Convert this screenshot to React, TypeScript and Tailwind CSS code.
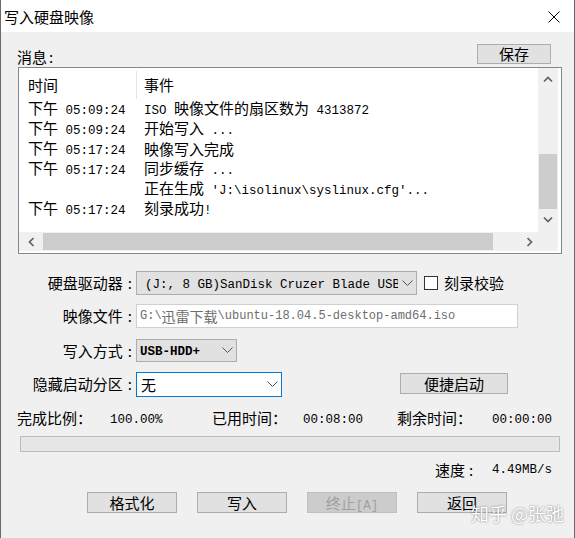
import type { ReactNode } from 'react';

function M({ children, className = '' }: { children: ReactNode; className?: string }) {
  return <span className={`font-['Liberation_Mono',monospace] text-[12.5px] ${className}`}>{children}</span>;
}

function Chev({ dir }: { dir: 'up' | 'down' | 'left' | 'right' }) {
  const pts = { up: '1,6.5 5,2.5 9,6.5', down: '1,3.5 5,7.5 9,3.5', left: '6.5,1 2.5,5 6.5,9', right: '3.5,1 7.5,5 3.5,9' }[dir];
  return (
    <svg width="10" height="10" viewBox="0 0 10 10">
      <polyline points={pts} fill="none" stroke="#606060" strokeWidth="1.7" />
    </svg>
  );
}

function DropArrow() {
  return (
    <svg width="11" height="7" viewBox="0 0 11 7" className="shrink-0">
      <polyline points="0.5,0.5 5.5,5.5 10.5,0.5" fill="none" stroke="#555" strokeWidth="1" />
    </svg>
  );
}

// form label, colon sits a little apart like the original
function Label({ text }: { text: string }) {
  return (
    <div className="w-[132px] whitespace-nowrap pr-[1px] text-right">
      {text}
      <span className="ml-[5px]">:</span>
    </div>
  );
}

const rows: { time?: string; event: ReactNode }[] = [
  { time: '05:09:24', event: <><M>ISO </M>映像文件的扇区数为<M> 4313872</M></> },
  { time: '05:09:24', event: <>开始写入<M> ...</M></> },
  { time: '05:17:24', event: <>映像写入完成</> },
  { time: '05:17:24', event: <>同步缓存<M> ...</M></> },
  { event: <>正在生成<M>{" 'J:\\isolinux\\syslinux.cfg'..."}</M></> },
  { time: '05:17:24', event: <>刻录成功<M>!</M></> },
];

export default function App() {
  return (
    <div className="relative h-[538px] w-[575px] overflow-hidden border-x border-[#6a6a6a] bg-[#f0f0f0] font-['Noto_Sans_CJK_SC',sans-serif] text-[15px] leading-[20px] text-black">
      {/* title bar */}
      <div className="flex h-[32px] items-center justify-between bg-white pl-[3px] pr-[14px] pt-[2px]">
        <span>写入硬盘映像</span>
        <svg width="12" height="12" viewBox="0 0 12 12">
          <path d="M0.5 0.5L11.5 11.5M11.5 0.5L0.5 11.5" stroke="#000" strokeWidth="1" />
        </svg>
      </div>

      <div className="pt-[12px]">
        <div className="ml-[16px] flex h-[23px] w-[534px] justify-between">
          <span className="self-end">消息<span className="ml-[2px]">:</span></span>
          <button className="h-[20px] w-[74px] border border-[#adadad] bg-[#e1e1e1] leading-[18px]">保存</button>
        </div>

        {/* message list */}
        <div className="ml-[17px] h-[187px] w-[544px] border border-[#828790] bg-white pb-[2px] pr-[3px]">
          <div className="grid h-full grid-cols-[1fr_20px] grid-rows-[1fr_19px]">
            <div className="overflow-hidden">
              <div className="flex h-[31px] items-center pt-[2px]">
                <div className="my-[2px] flex h-[28px] w-[118px] items-center border-r border-[#e5e5e5] pl-[9px]">时间</div>
                <div className="pl-[7px]">事件</div>
              </div>
              {rows.map((r, i) => (
                <div key={i} className="flex h-[20px] items-center whitespace-nowrap">
                  <div className="w-[118px] pl-[9px]">
                    {r.time && <>下午<M> {r.time}</M></>}
                  </div>
                  <div className="pl-[7px]">{r.event}</div>
                </div>
              ))}
            </div>
            <div className="flex flex-col bg-[#f0f0f0]">
              <div className="flex h-[22px] items-center justify-center pt-[2px]"><Chev dir="up" /></div>
              <div className="h-[64px]" />
              <div className="mx-[1px] h-[55px] bg-[#cdcdcd]" />
              <div className="flex-1" />
              <div className="flex h-[22px] items-center justify-center pb-[4px]"><Chev dir="down" /></div>
            </div>
            <div className="flex bg-[#f0f0f0]">
              <div className="flex w-[22px] items-center justify-center pl-[3px]"><Chev dir="left" /></div>
              <div className="w-[2px]" />
              <div className="my-[1px] w-[450px] bg-[#cdcdcd]" />
              <div className="flex-1" />
              <div className="flex w-[22px] items-center justify-center pl-[4px]"><Chev dir="right" /></div>
            </div>
            <div className="bg-[#f0f0f0]" />
          </div>
        </div>

        {/* form */}
        <div className="mt-[17px] flex h-[24px] items-center">
          <Label text="硬盘驱动器" />
          <div className="ml-[3px] flex h-[24px] w-[281px] items-center border border-[#adadad] bg-[#e1e1e1] pl-[8px] pr-[3px]">
            <div className="flex-1 overflow-hidden whitespace-nowrap"><M className="text-[12.4px]">(J:, 8 GB)SanDisk Cruzer Blade USB Device</M></div>
            <div className="ml-[4px]"><DropArrow /></div>
          </div>
          <div className="ml-[7px] h-[14px] w-[14px] border border-[#333] bg-white" />
          <span className="ml-[6px]">刻录校验</span>
        </div>

        <div className="mt-[9px] flex h-[24px] items-center">
          <Label text="映像文件" />
          <div className="ml-[3px] flex h-[24px] w-[382px] items-center overflow-hidden whitespace-nowrap border border-[#d0d0d0] bg-white pl-[3px] text-[#6d6d6d]">
            <M className="text-[12px]">{'G:\\'}</M>
            <span className="text-[14px]">迅雷下载</span>
            <M className="text-[12px]">{'\\ubuntu-18.04.5-desktop-amd64.iso'}</M>
          </div>
        </div>

        <div className="mt-[11px] flex h-[23px] items-center">
          <Label text="写入方式" />
          <div className="ml-[3px] flex h-[23px] w-[101px] items-center border border-[#adadad] bg-[#e1e1e1] pl-[3px] pr-[3px]">
            <div className="flex-1"><M className="text-[10.5px] font-bold">USB-HDD+</M></div>
            <DropArrow />
          </div>
        </div>

        <div className="mt-[10px] flex h-[25px] items-start">
          <div className="pt-[2px]"><Label text="隐藏启动分区" /></div>
          <div className="ml-[3px] flex h-[25px] w-[146px] items-center border border-[#0078d7] bg-white pl-[4px] pr-[3px]">
            <div className="flex-1">无</div>
            <DropArrow />
          </div>
          <button className="ml-[118px] mt-[1px] h-[21px] w-[108px] border border-[#adadad] bg-[#e1e1e1] leading-[19px]">便捷启动</button>
        </div>

        {/* progress */}
        <div className="mt-[11px] flex h-[20px] items-center whitespace-nowrap pl-[16px]">
          <span className="w-[93px]">完成比例：</span>
          <span className="w-[102px]"><M>100.00%</M></span>
          <span className="w-[91px]">已用时间：</span>
          <span className="w-[94px]"><M>00:08:00</M></span>
          <span className="w-[95px]">剩余时间：</span>
          <span><M>00:00:00</M></span>
        </div>
        <div className="ml-[19px] mt-[8px] h-[16px] w-[540px] border border-[#bcbcbc] bg-[#e6e6e6]" />
        <div className="ml-[434px] mt-[8px] flex h-[20px] items-center whitespace-nowrap">
          <span className="w-[57px]">速度<span className="ml-[4px]">:</span></span>
          <M>4.49MB/s</M>
        </div>

        <div className="ml-[86px] mt-[12px] flex gap-[20px]">
          <button className="h-[21px] w-[90px] border border-[#adadad] bg-[#e1e1e1] leading-[19px]">格式化</button>
          <button className="h-[21px] w-[90px] border border-[#adadad] bg-[#e1e1e1] leading-[19px]">写入</button>
          <button className="h-[21px] w-[90px] border border-[#bfbfbf] bg-[#cccccc] leading-[19px] text-[#a0a0a0]">终止<M>[A]</M></button>
          <button className="h-[21px] w-[90px] border border-[#adadad] bg-[#e1e1e1] leading-[19px]">返回</button>
        </div>
      </div>

      <div className="absolute left-[470px] top-[502px] whitespace-nowrap text-[18px] leading-[22px] text-white [text-shadow:0_0_2px_rgba(0,0,0,0.55)]">
        知乎 @张弛
      </div>
    </div>
  );
}
